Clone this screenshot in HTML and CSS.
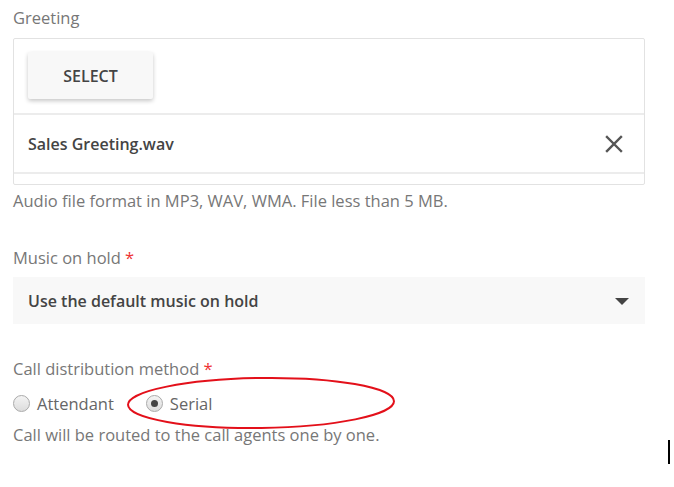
FILE: index.html
```html
<!DOCTYPE html>
<html>
<head>
<meta charset="utf-8">
<link rel="stylesheet" href="styles.css">
</head>
<body>
<div class="form">
  <div class="field greeting">
    <div class="label">Greeting</div>
    <div class="upload">
      <div class="upload-top">
        <button class="btn-select">SELECT</button>
      </div>
      <div class="file-row">
        <span class="file-name">Sales Greeting.wav</span>
        <svg class="close" width="18" height="18" viewBox="0 0 18 18"><path d="M2 2 L16 16 M16 2 L2 16" stroke="#555" stroke-width="2.4" stroke-linecap="square"/></svg>
      </div>
      <div class="upload-bottom"></div>
    </div>
    <div class="hint">Audio file format in MP3, WAV, WMA. File less than 5 MB.</div>
  </div>

  <div class="field music">
    <div class="label">Music on hold <span class="req">*</span></div>
    <div class="select">
      <span class="select-text">Use the default music on hold</span>
      <svg class="caret" width="14" height="8" viewBox="0 0 14 8"><path d="M0 0 H14 L7 7 Z" fill="#444"/></svg>
    </div>
  </div>

  <div class="field dist">
    <div class="label">Call distribution method <span class="req">*</span></div>
    <div class="radios">
      <label class="radio"><span class="dot"></span>Attendant</label>
      <label class="radio checked"><span class="dot"></span>Serial</label>
      <svg class="ellipse" width="272" height="56" viewBox="0 0 272 56"><ellipse cx="136" cy="28" rx="133" ry="25" fill="none" stroke="#e3101a" stroke-width="2" transform="rotate(-0.8 136 28)"/></svg>
    </div>
    <div class="hint">Call will be routed to the call agents one by one.</div>
  </div>
</div>
<div class="cursor"></div>
</body>
</html>
```
FILE: styles.css
```css
html, body {
  margin: 0;
  padding: 0;
  background: #fff;
}
body {
  font-family: "Open Sans", "Noto Sans", sans-serif;
  font-size: 16.5px;
  color: #444;
  position: relative;
  height: 487px;
  overflow: hidden;
}
.form {
  padding: 7px 29px 0 13px;
  display: flex;
  flex-direction: column;
}
.label {
  color: #777;
  line-height: 22px;
  height: 22px;
}
.req { color: #e33; }
.greeting .label { margin-bottom: 9px; }
.upload {
  border: 1px solid #e2e2e2;
  border-radius: 2px;
  display: flex;
  flex-direction: column;
}
.upload-top {
  padding: 13px 14px 14px;
  border-bottom: 2px solid #ececec;
}
.btn-select {
  width: 125px;
  height: 47px;
  border: none;
  background: #f8f8f8;
  border-radius: 2px;
  box-shadow: 0 2px 4px rgba(0,0,0,0.22);
  font-family: inherit;
  font-size: 16px;
  font-weight: 600;
  color: #444;
  display: block;
}
.file-row {
  height: 57px;
  padding: 0 21px 0 14px;
  display: flex;
  align-items: center;
  justify-content: space-between;
  border-bottom: 2px solid #ececec;
}
.file-name {
  font-weight: 600;
  font-size: 16px;
  color: #444;
}
.upload-bottom { height: 10px; }
.hint {
  color: #777;
  line-height: 22px;
  margin-top: 5px;
}
.music { margin-top: 35px; }
.music .label { margin-bottom: 8px; }
.select {
  height: 47px;
  background: #f8f8f8;
  display: flex;
  align-items: center;
  justify-content: space-between;
  padding: 0 16px 0 15px;
}
.select-text { font-weight: 600; font-size: 16px; color: #444; }
.caret { margin-top: 2px; }
.dist { margin-top: 34px; }
.radios {
  position: relative;
  display: flex;
  align-items: center;
  height: 22px;
  margin-top: 12px;
  color: #666;
}
.radio {
  display: flex;
  align-items: center;
  gap: 7px;
  margin-right: 32px;
}
.dot {
  width: 15px;
  height: 15px;
  border-radius: 50%;
  border: 1px solid #aaa;
  background: linear-gradient(#f4f4f4, #dcdcdc);
  box-sizing: content-box;
  position: relative;
}
.radio.checked .dot::after {
  content: "";
  position: absolute;
  left: 4px;
  top: 4px;
  width: 7px;
  height: 7px;
  border-radius: 50%;
  background: #444;
}
.ellipse {
  position: absolute;
  left: 112px;
  top: -17px;
}
.dist .hint { margin-top: 10px; }
.cursor {
  position: absolute;
  left: 668px;
  top: 440px;
  width: 2px;
  height: 24px;
  background: #000;
}
```
